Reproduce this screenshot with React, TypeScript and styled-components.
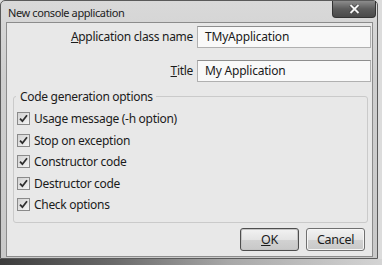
import React from 'react';
import styled, { createGlobalStyle } from 'styled-components';

const GlobalStyle = createGlobalStyle`
	html, body {
		margin: 0;
		padding: 0;
	}
	body {
		width: 382px;
		height: 265px;
		overflow: hidden;
		background: #dadada;
		font-family: 'Noto Sans', 'Open Sans', sans-serif;
		color: #1b1b1b;
	}
`;

const options = [
	'Usage message (-h option)',
	'Stop on exception',
	'Constructor code',
	'Destructor code',
	'Check options',
];

function CheckMark() {
	return (
		<svg width='9' height='9' viewBox='0 0 9 9'>
			<path d='M1 4.6 L3.4 7.2 L8 1.2' fill='none' stroke='#2e2e2e' strokeWidth='1.8' />
		</svg>
	);
}

export default function App() {
	return (
		<Page>
			<GlobalStyle />
			<Window>
				<TitleBar>
					<Caption>New console application</Caption>
					<CloseButton>
						<svg width='11' height='10' viewBox='0 0 11 10'>
							<path d='M1.5 1 L9.5 9 M9.5 1 L1.5 9' stroke='#3a3a3a' strokeWidth='3.4' />
							<path d='M1.5 1 L9.5 9 M9.5 1 L1.5 9' stroke='#f4f4f4' strokeWidth='2' />
						</svg>
					</CloseButton>
				</TitleBar>
				<Client>
					<FieldGrid>
						<Label>
							<u>A</u>pplication class name
						</Label>
						<TextBox>TMyApplication</TextBox>
						<Label>
							<u>T</u>itle
						</Label>
						<TextBox>My Application</TextBox>
					</FieldGrid>
					<GroupBox>
						<Legend>Code generation options</Legend>
						{options.map((o) => (
							<CheckRow key={o}>
								<CheckBox>
									<CheckMark />
								</CheckBox>
								{o}
							</CheckRow>
						))}
					</GroupBox>
					<ButtonRow>
						<Button $default>
							<u>O</u>K
						</Button>
						<Button>Cancel</Button>
					</ButtonRow>
				</Client>
			</Window>
			<Shadow />
		</Page>
	);
}

// Styled Components ...
const Page = styled.div`
	width: 382px;
	height: 265px;
	display: flex;
	flex-direction: column;
	background: #dcdcdc;
`;
const Window = styled.div`
	box-sizing: border-box;
	width: 378px;
	height: 259px;
	display: flex;
	flex-direction: column;
	border: 1px solid #5a5a5a;
	border-radius: 5px 5px 0 0;
	background: linear-gradient(#d9d9d9, #cecece 30%, #c9c9c9);
`;
const TitleBar = styled.div`
	height: 21px;
	display: flex;
	justify-content: space-between;
	align-items: flex-start;
	padding-left: 7px;
`;
const Caption = styled.span`
	font-size: 11px;
	letter-spacing: -0.4px;
	line-height: 23px;
	color: #222;
`;
const CloseButton = styled.div`
	width: 44px;
	height: 17px;
	margin-right: 1px;
	box-sizing: border-box;
	display: flex;
	align-items: center;
	justify-content: center;
	border: 1px solid #333;
	border-top: none;
	border-radius: 0 0 4px 4px;
	background: linear-gradient(#8c8c8c, #5c5c5c 50%, #4a4a4a);
`;
const Client = styled.div`
	flex: 1;
	display: flex;
	flex-direction: column;
	margin: 0 4px 1px 5px;
	padding: 3px 7px 5px 6px;
	border: 1px solid #8c8c8c;
	background: #e8e8e8;
	font-size: 12px;
	letter-spacing: -0.3px;
`;
const FieldGrid = styled.div`
	display: grid;
	grid-template-columns: 1fr 174px;
	column-gap: 4px;
	row-gap: 12px;
	align-items: center;
	margin-right: -6px;
`;
const Label = styled.label`
	text-align: right;
	line-height: 16px;
`;
const TextBox = styled.div`
	box-sizing: border-box;
	height: 22px;
	padding: 0 7px;
	border: 1px solid #b0b0b0;
	border-top-color: #8e8e8e;
	background: #f9f9f9;
	letter-spacing: -0.2px;
	line-height: 20px;
	color: #1a1a1a;
`;
const GroupBox = styled.fieldset`
	margin: 7px -3px 0 0;
	padding: 4px 0 6px 3px;
	border: 1px solid #cacaca;
	border-radius: 3px;
	min-width: 0;
`;
const Legend = styled.legend`
	padding: 0 3px 0 4px;
	margin-left: -1px;
	line-height: 15px;
`;
const CheckRow = styled.div`
	height: 21.5px;
	display: flex;
	align-items: center;
	gap: 4px;
`;
const CheckBox = styled.span`
	box-sizing: border-box;
	width: 13px;
	height: 13px;
	display: flex;
	align-items: center;
	justify-content: center;
	border: 1px solid #8a8a8a;
	background: linear-gradient(135deg, #d2d2d2, #f4f4f4);
`;
const ButtonRow = styled.div`
	margin-top: auto;
	display: flex;
	justify-content: flex-end;
	gap: 7px;
`;
const Button = styled.div<{ $default?: boolean }>`
	box-sizing: border-box;
	width: 59px;
	height: 23px;
	display: flex;
	align-items: center;
	justify-content: center;
	border: 1px solid ${(p) => (p.$default ? '#4e4e4e' : '#707070')};
	border-radius: 3px;
	background: linear-gradient(#f2f2f2, #e4e4e4 50%, #d2d2d2 51%, #c8c8c8);
	box-shadow: inset 0 0 0 1px ${(p) => (p.$default ? '#c4c4c4' : '#f6f6f6')};
	font-size: 12.5px;
`;
const Shadow = styled.div`
	height: 6px;
	background: linear-gradient(to right, #3c3c3c, #6a6a6a 30%, #a8a8a8 60%, #d4d4d4);
`;
